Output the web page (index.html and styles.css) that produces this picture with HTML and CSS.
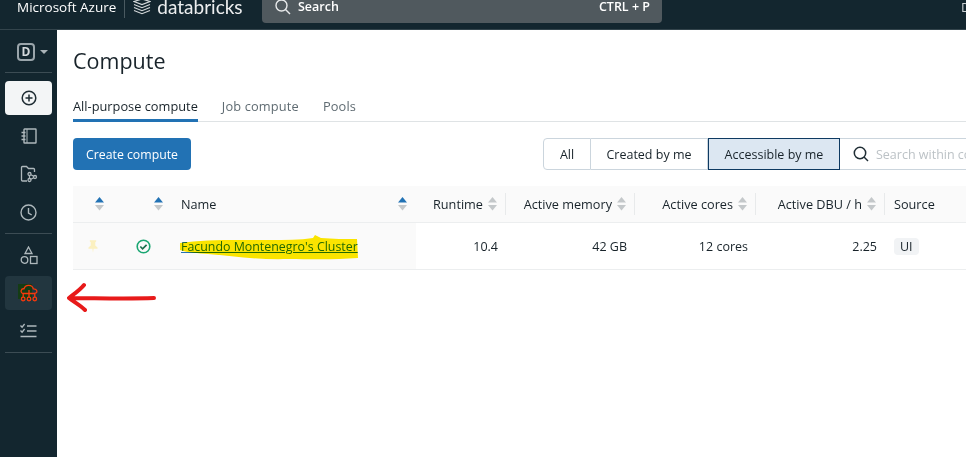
FILE: index.html
```html
<!DOCTYPE html>
<html lang="en">
  <head>
    <meta charset="UTF-8" />
    <title>Compute</title>
    <link rel="stylesheet" href="styles.css">
  </head>
  <body>
    <header class="topbar">
      <span class="azure">Microsoft Azure</span>
      <span class="top-divider"></span>
      <svg class="brick" width="18" height="15" viewBox="0 0 18 15" fill="none" stroke="#d5d9db" stroke-width="1.200">
        <path d="M1 1.500 9 -1l8 2.500-8 3z" />
        <path d="M1 4.500l8 3.200 8-3.200" />
        <path d="M1 7.500l8 3.200 8-3.200" />
        <path d="M1 10.500l8 3.200 8-3.200" />
      </svg>
      <span class="wordmark">databricks</span>
      <div class="global-search">
        <svg width="16" height="15" viewBox="0 0 16 15" fill="none" stroke="#e8eaeb" stroke-width="1.400">
          <circle cx="6.500" cy="5.500" r="5.500" />
          <path d="M10.500 9.500l4.500 4.500" />
        </svg>
        <span class="global-label">Search</span>
        <span class="shortcut">CTRL + P</span>
      </div>
      <span class="user-cut">D</span>
    </header>

    <div class="shell">
      <nav class="sidebar">
        <div class="workspace">
          <span class="badge">D</span>
          <span class="caret"></span>
        </div>
        <div class="side-line"></div>
        <a class="side-item side-new">
          <svg width="16" height="16" viewBox="0 0 16 16" fill="none" stroke="#1f2d34" stroke-width="1.500">
            <circle cx="8" cy="8" r="6.800" />
            <path d="M8 4.500v7M4.500 8h7" />
          </svg>
        </a>
        <a class="side-item side-plain">
          <svg width="16" height="16" viewBox="0 0 16 16" fill="none" stroke="#aeb8bc" stroke-width="1.400">
            <rect x="3" y="1" width="12" height="14" rx="0.500" />
            <path d="M6 1v14" stroke-width="1" />
            <path d="M0.500 4.500h4M0.500 8h4M0.500 11.500h4" />
          </svg>
        </a>
        <a class="side-item side-plain">
          <svg width="18" height="18" viewBox="0 0 18 18" fill="none" stroke="#aeb8bc" stroke-width="1.300">
            <path d="M7 16H2.500a1 1 0 0 1-1-1V2.500a1 1 0 0 1 1-1h4l2 2h5a1 1 0 0 1 1 1V7" />
            <circle cx="9.500" cy="9" r="1.500" />
            <circle cx="9.500" cy="15" r="1.500" />
            <circle cx="15" cy="12" r="1.500" />
            <path d="M9.500 10.500v3M11 9.800l2.600 1.500M11 14.200l2.600-1.500" />
          </svg>
        </a>
        <a class="side-item side-plain">
          <svg width="17" height="17" viewBox="0 0 17 17" fill="none" stroke="#aeb8bc" stroke-width="1.400">
            <circle cx="8.500" cy="8.500" r="7.500" />
            <path d="M8.500 4v5l3.200 2" />
          </svg>
        </a>
        <div class="side-line side-line-mid"></div>
        <a class="side-item side-plain">
          <svg width="18" height="19" viewBox="0 0 18 19" fill="none" stroke="#aeb8bc" stroke-width="1.300">
            <path d="M8.500 1 12 7.500H5z" />
            <circle cx="4.500" cy="14" r="3.300" />
            <rect x="10.500" y="10.500" width="6.500" height="7" />
          </svg>
        </a>
        <a class="side-item side-active">
          <svg class="compute-icon" width="18" height="18" viewBox="0 0 18 18" fill="none" stroke="#f8390c" stroke-width="1.300">
            <path class="patch" d="M-2 0H12V15H-2z" />
            <path d="M3.500 9.500C1.500 9.500 0.800 7.800 1.200 6.500 1.600 5.200 2.800 4.600 4 4.800 4.600 2.600 6.500 1.200 8.800 1.300c2.400.1 4.200 1.700 4.500 3.600 1.800-.2 3.500 1 3.600 2.400.1 1.200-1 2.200-2.500 2.200H3.500z" />
            <path d="M3.200 9.500V13M9 6v7M14.800 9.500V13" />
            <circle cx="3.200" cy="15" r="1.800" />
            <circle cx="9" cy="15" r="1.800" />
            <circle cx="14.800" cy="15" r="1.800" />
          </svg>
        </a>
        <a class="side-item side-plain">
          <svg width="17" height="16" viewBox="0 0 17 16" fill="none" stroke="#aeb8bc" stroke-width="1.300">
            <path d="M0.500 2.500l1.600 1.700L4.600 1M0.500 7.500l1.600 1.700 2.500-3.200" />
            <path d="M7 3h9.500M7 8h9.500M0.500 13.500h16" />
          </svg>
        </a>
        <div class="side-line side-line-end"></div>
      </nav>

      <main class="content">
        <h1 class="page-title">Compute</h1>

        <div class="tabs">
          <a class="tab tab-on">All-purpose compute</a>
          <a class="tab">Job compute</a>
          <a class="tab">Pools</a>
        </div>

        <div class="toolbar">
          <button class="btn-create">Create compute</button>
          <div class="filters">
            <button class="filter filter-first">All</button>
            <button class="filter filter-created">Created by me</button>
            <button class="filter filter-on">Accessible by me</button>
            <div class="filter-search">
              <svg width="16" height="16" viewBox="0 0 16 16" fill="none" stroke="#1f2d34" stroke-width="1.500">
                <circle cx="7" cy="7" r="5.700" />
                <path d="M11 11l4 4" />
              </svg>
              <span>Search within compute</span>
            </div>
          </div>
        </div>

        <div class="grid">
          <div class="cell head c-pin"><svg class="sort" width="9" height="14" viewBox="0 0 9 14"><path class="up-on" d="M4.500 0 9 5.500H0z" /><path class="down" d="M0 8h9l-4.500 5.500z" /></svg></div>
          <div class="cell head c-state"><svg class="sort" width="9" height="14" viewBox="0 0 9 14"><path class="up-on" d="M4.500 0 9 5.500H0z" /><path class="down" d="M0 8h9l-4.500 5.500z" /></svg></div>
          <div class="cell head c-name"><span>Name</span><svg class="sort" width="9" height="14" viewBox="0 0 9 14"><path class="up-on" d="M4.500 0 9 5.500H0z" /><path class="down" d="M0 8h9l-4.500 5.500z" /></svg></div>
          <div class="cell head c-num rule"><span>Runtime</span><svg class="sort" width="9" height="14" viewBox="0 0 9 14"><path class="down" d="M4.500 0 9 5.500H0z" /><path class="down" d="M0 8h9l-4.500 5.500z" /></svg></div>
          <div class="cell head c-num rule"><span>Active memory</span><svg class="sort" width="9" height="14" viewBox="0 0 9 14"><path class="down" d="M4.500 0 9 5.500H0z" /><path class="down" d="M0 8h9l-4.500 5.500z" /></svg></div>
          <div class="cell head c-num rule"><span>Active cores</span><svg class="sort" width="9" height="14" viewBox="0 0 9 14"><path class="down" d="M4.500 0 9 5.500H0z" /><path class="down" d="M0 8h9l-4.500 5.500z" /></svg></div>
          <div class="cell head c-num rule"><span>Active DBU / h</span><svg class="sort" width="9" height="14" viewBox="0 0 9 14"><path class="down" d="M4.500 0 9 5.500H0z" /><path class="down" d="M0 8h9l-4.500 5.500z" /></svg></div>
          <div class="cell head c-source"><span>Source</span></div>

          <div class="cell row fixed c-pin">
            <svg class="pin" width="10" height="13" viewBox="0 0 11 14"><path d="M2 0h7v1.500L8 2.200v3.600l2.500 2.400v1.300H6.200L5.500 14l-.7-4.500H.5V8.200L3 5.800V2.200L2 1.500z" /></svg>
          </div>
          <div class="cell row fixed c-state">
            <svg width="15" height="15" viewBox="0 0 15 15" fill="none" stroke="#1aa672">
              <circle cx="7.500" cy="7.500" r="6.300" stroke-width="1.600" />
              <path d="M4.300 7.500l2.300 2.300 4-4" stroke="#1b6f4c" stroke-width="1.700" />
            </svg>
          </div>
          <div class="cell row fixed c-name"><a class="cluster">Facundo Montenegro's Cluster</a></div>
          <div class="cell row c-val">10.4</div>
          <div class="cell row c-val">42 GB</div>
          <div class="cell row c-val">12 cores</div>
          <div class="cell row c-val">2.25</div>
          <div class="cell row c-source"><span class="chip">UI</span></div>
        </div>
      </main>
    </div>

    <!-- marks drawn on top of the screenshot -->
    <svg class="marks" width="966" height="457" viewBox="0 0 966 457" fill="none">
      <path class="marker" d="M180 243c25-4 60-3 90-3 15 0 30 0 43-2l2-3 6 3c12 1 24 1 36 1l1 19c-25 2-50 1-70 1-30 1-55-3-80-5-10-1-20-1-28-4z" />
      <path class="pen" d="M154 298c-30 1-60 0-84 0M84 285c-4 5-10 9-15 13 5 4 11 7 16 12" />
    </svg>
  </body>
</html>
```

FILE: styles.css
```css
* {
  padding: 0;
  margin: 0;
  box-sizing: border-box;
}
body {
  position: relative;
  width: 966px;
  height: 457px;
  overflow: hidden;
  background-color: #fff;
  color: #18232a;
  font-family: "Open Sans", "Noto Sans", sans-serif;
  font-size: 12.5px;
}

/* top bar */
.topbar {
  height: 30px;
  display: flex;
  align-items: flex-start;
  padding-left: 17px;
  background-color: #13262f;
  border-bottom: 1px solid #33444c;
  color: #fff;
}
.azure {
  font-size: 13.5px;
  line-height: 14px;
}
.top-divider {
  width: 1px;
  height: 18px;
  margin-left: 8px;
  background-color: #4a5a61;
}
.brick {
  margin-left: 8px;
}
.wordmark {
  margin-left: 6px;
  font-family: "Lato", sans-serif;
  font-size: 19px;
  line-height: 13px;
  color: #eceeef;
}
.global-search {
  position: absolute;
  left: 262px;
  top: 0;
  width: 400px;
  height: 23px;
  display: flex;
  align-items: flex-start;
  padding: 0 12px 0 13px;
  background-color: #50595e;
  border-radius: 0 0 4px 4px;
}
.global-label,
.shortcut {
  font-size: 12.5px;
  font-weight: 600;
  line-height: 13px;
}
.global-label {
  margin-left: 7px;
}
.shortcut {
  margin-left: auto;
}
.user-cut {
  margin-left: auto;
  width: 5px;
  overflow: hidden;
  font-size: 13px;
  line-height: 14px;
  color: #c9ced1;
}

/* left nav */
.shell {
  display: flex;
  height: 427px;
}
.sidebar {
  width: 57px;
  flex-shrink: 0;
  padding: 13px 5px 0 5px;
  background-color: #13262f;
}
.workspace {
  display: flex;
  align-items: center;
  gap: 5px;
  padding-left: 12px;
  height: 18px;
}
.badge {
  width: 18px;
  height: 18px;
  border: 2px solid #9aa5ab;
  border-radius: 4px;
  color: #d4d9dc;
  font-size: 12px;
  font-weight: 700;
  line-height: 14px;
  text-align: center;
}
.caret {
  width: 0;
  height: 0;
  border-left: 4px solid transparent;
  border-right: 4px solid transparent;
  border-top: 4px solid #aab3b8;
}
.side-line {
  height: 1px;
  margin-top: 11px;
  background-color: #3c4c54;
}
.side-item {
  display: flex;
  align-items: center;
  justify-content: center;
  height: 34px;
  border-radius: 4px;
}
.side-new {
  margin-top: 8px;
  background-color: #f3f5f6;
}
.side-plain {
  margin-top: 4px;
}
.side-line-mid {
  margin-top: 4px;
}
.side-line-mid + .side-item {
  margin-top: 4px;
}
.side-active {
  margin-top: 4px;
  background-color: #22363f;
}
.side-active + .side-item {
  margin-top: 4px;
}
.side-line-end {
  margin-top: 4px;
}
.compute-icon {
  overflow: visible;
}
.compute-icon .patch {
  fill: #143c14;
  stroke: none;
}

/* page */
.content {
  flex: 1;
  min-width: 0;
  padding: 16px 0 0 16px;
  overflow: hidden;
}
.page-title {
  font-size: 21.5px;
  font-weight: 400;
  line-height: 30px;
}
.tabs {
  display: flex;
  gap: 24px;
  margin-top: 17px;
  height: 29px;
  border-bottom: 1px solid #dfe3e5;
  font-size: 12.8px;
}
.tab {
  height: 29px;
  line-height: 26px;
  letter-spacing: 0.15px;
  color: #5f6b72;
}
.tab-on {
  letter-spacing: 0;
  color: #18232a;
  border-bottom: 3px solid #2272b4;
}
.toolbar {
  display: flex;
  margin-top: 16px;
}
.btn-create {
  width: 118px;
  height: 32px;
  flex-shrink: 0;
  background-color: #2272b4;
  color: #fff;
  border: none;
  border-radius: 4px;
  font: inherit;
  font-size: 12.3px;
}
.filters {
  display: flex;
  margin-left: 352px;
  height: 32px;
  flex-shrink: 0;
}
.filter {
  height: 32px;
  background-color: #fff;
  border: 1px solid #cbd5dd;
  border-left: none;
  color: #18232a;
  font: inherit;
}
.filter-first {
  width: 48px;
  border-left: 1px solid #cbd5dd;
  border-radius: 4px 0 0 4px;
}
.filter-created {
  width: 117px;
}
.filter-on {
  width: 132px;
  background-color: #dce7f2;
  border: 1px solid #0e3a62;
}
.filter-search {
  display: flex;
  align-items: center;
  gap: 7px;
  width: 200px;
  padding-left: 13px;
  border: 1px solid #cbd5dd;
  border-left: none;
  color: #bcc2c6;
}

/* table */
.grid {
  display: grid;
  grid-template-columns: 44px 55px 244px 90px 129px 121px 129px 120px;
  grid-template-rows: 37px 47px;
  margin-top: 16px;
  width: 932px;
}
.cell {
  display: flex;
  align-items: center;
  border-bottom: 1px solid #eceeef;
}
.head {
  position: relative;
  gap: 5px;
  justify-content: flex-end;
  background-color: #fafafa;
  font-size: 12.7px;
}
.rule::after {
  content: "";
  position: absolute;
  right: 0;
  top: 7px;
  height: 22px;
  width: 1px;
  background-color: #e8eaeb;
}
.c-pin.head {
  padding-right: 13px;
}
.c-state.head {
  padding-right: 9px;
}
.c-name {
  padding: 0 9px;
  justify-content: space-between;
}
.c-num {
  padding-right: 9px;
}
.c-source {
  padding-left: 9px;
  justify-content: flex-start;
}
.fixed {
  background-color: #fafafa;
}
.row.c-pin {
  padding-left: 15px;
}
.row.c-state {
  padding-left: 19px;
}
.c-val {
  justify-content: flex-end;
  padding-right: 8px;
}
.sort .up-on {
  fill: #2272b4;
}
.sort .down {
  fill: #c4c8ca;
}
.pin path {
  fill: #fbf0c0;
}
.cluster {
  color: #2272b4;
  text-decoration: underline;
  font-size: 12.4px;
}
.chip {
  padding: 0 6px;
  line-height: 17px;
  background-color: #f1f3f5;
  border-radius: 4px;
}

/* annotation layer */
.marks {
  position: absolute;
  left: 0;
  top: 0;
  pointer-events: none;
  mix-blend-mode: multiply;
}
.marker {
  fill: #ffe900;
}
.pen {
  stroke: #e81a1a;
  stroke-width: 4;
  stroke-linecap: round;
  stroke-linejoin: round;
}
```
